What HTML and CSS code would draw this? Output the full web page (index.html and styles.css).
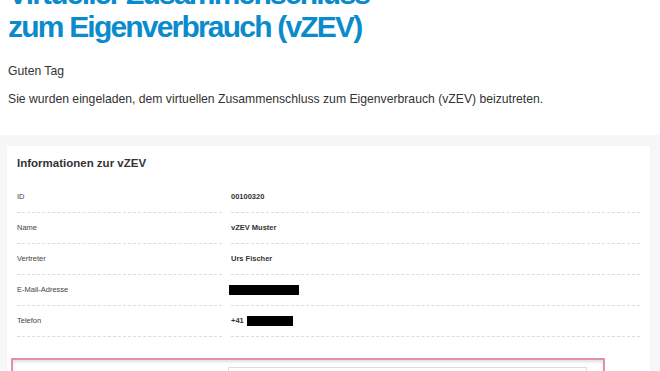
FILE: index.html
```html
<!DOCTYPE html>
<html>
<head>
  <title>Einladung vZEV</title>
  <link rel="stylesheet" href="styles.css">
</head>
<body>
  <div class="intro">
    <h1>Virtueller Zusammenschluss zum Eigenverbrauch (vZEV)</h1>
    <p>Guten Tag</p>
    <p>Sie wurden eingeladen, dem virtuellen Zusammenschluss zum Eigenverbrauch (vZEV) beizutreten.</p>
  </div>

  <div class="section">
    <div class="card">
      <h2>Informationen zur vZEV</h2>
      <div class="info">
        <div class="label">ID</div>
        <div class="value">00100320</div>
        <div class="label">Name</div>
        <div class="value">vZEV Muster</div>
        <div class="label">Vertreter</div>
        <div class="value">Urs Fischer</div>
        <div class="label">E-Mail-Adresse</div>
        <div class="value"><span class="redacted email"></span></div>
        <div class="label">Telefon</div>
        <div class="value">+41 <span class="redacted phone"></span></div>
      </div>
      <div class="form-box">
        <div class="form-field"></div>
      </div>
    </div>
  </div>
</body>
</html>
```

FILE: styles.css
```css
* {
  box-sizing: border-box;
}
body {
  margin: 0;
  font-family: "Liberation Sans", Arial, sans-serif;
  color: #333;
  background-color: #fff;
  overflow: hidden;
}
.intro {
  padding: 0 8px;
}
h1 {
  margin: -23px 0 0;
  width: 420px;
  font-size: 30px;
  line-height: 33px;
  letter-spacing: -1.8px;
  font-weight: bold;
  color: #0a8ccc;
}
.intro p {
  margin: 0;
  font-size: 12.2px;
  line-height: 15px;
}
.intro p:first-of-type {
  margin-top: 21px;
}
.intro p + p {
  margin-top: 13px;
}
.section {
  margin-top: 28px;
  padding: 11px 10px 0 7px;
  background-color: #f7f6f9;
}
.card {
  background-color: #fff;
  padding: 10px 3px 0 3px;
  box-shadow: 0 0 2px rgba(0, 0, 0, 0.04);
}
h2 {
  margin: 0 0 12px 7px;
  font-size: 11.5px;
  line-height: 14px;
  font-weight: bold;
  color: #333;
}
.info {
  display: grid;
  grid-template-columns: 205px 409px;
  column-gap: 9px;
  margin-left: 7px;
}
.label,
.value {
  padding: 10px 0;
  font-size: 7.5px;
  line-height: 10px;
  color: #444;
  border-bottom: 1px dashed #dcdcdc;
}
.value {
  font-weight: bold;
  color: #333;
}
.redacted {
  display: inline-block;
  height: 10px;
  background-color: #000;
  vertical-align: middle;
}
.email {
  width: 70px;
  margin-left: -2px;
}
.phone {
  width: 46px;
  margin-left: 1px;
}
.form-box {
  margin: 21px 0 0 1px;
  width: 594px;
  height: 14px;
  border: 2px solid #e38fb0;
  border-bottom: 0;
  box-shadow: inset 0 2px 3px rgba(0, 0, 0, 0.12);
  padding: 7px 16px 0 215px;
}
.form-field {
  height: 5px;
  border: 1px solid #ddd;
  border-bottom: 0;
  background-color: #fff;
}
```
